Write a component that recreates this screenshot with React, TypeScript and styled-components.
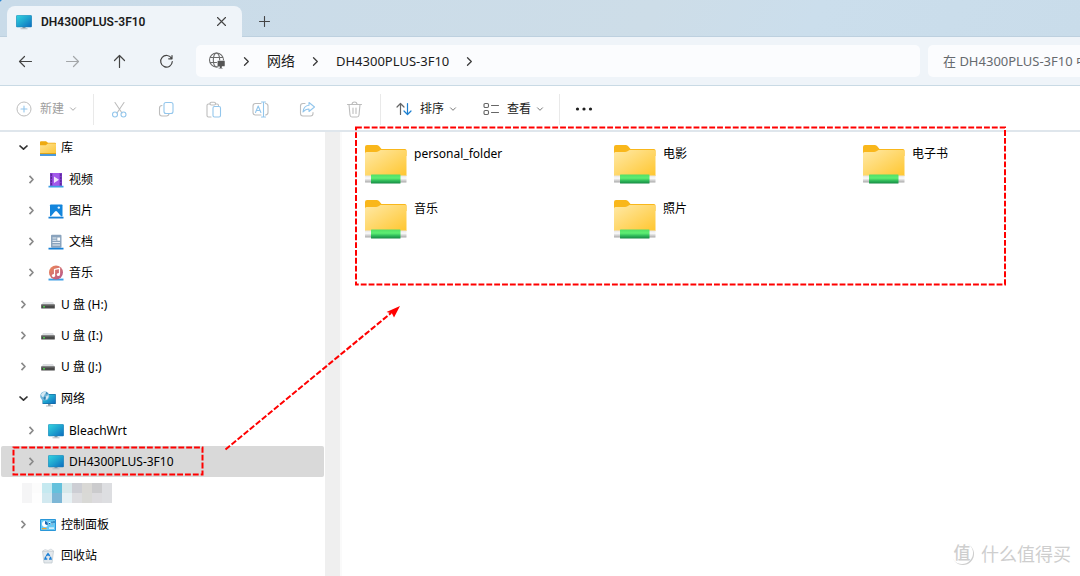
import React, { useState } from "react";
import styled, { createGlobalStyle, css } from "styled-components";

const GlobalStyle = createGlobalStyle`
  * { box-sizing: border-box; }
  html, body, #root { height: 100%; }
  body {
    margin: 0;
    background: #2f86cf;
    font-family: "Noto Sans", "Noto Sans CJK SC", sans-serif;
    font-size: 12px;
    line-height: 16px;
    color: #1b1b1b;
    overflow: hidden;
  }
  button, input { font: inherit; color: inherit; }
  ul { list-style: none; margin: 0; padding: 0; }
`;

const Window = styled.div`
  position: relative;
  display: flex;
  flex-direction: column;
  min-height: 100%;
  background: #fff;
  border-top-left-radius: 4px;
  overflow: hidden;
`;

const PlainButton = styled.button`
  display: flex;
  align-items: center;
  justify-content: center;
  padding: 0;
  border: 0;
  background: none;
  cursor: default;
`;

const TabStrip = styled.header`
  display: flex;
  align-items: flex-end;
  height: 37px;
  padding-left: 7px;
  background: linear-gradient(115deg, #c9dbe9 0%, #cddde8 60%, #cbdeec 75%, #c9dcea 100%);
  box-shadow: inset 0 -1px #bdd0df;
`;

const Tab = styled.div`
  display: flex;
  align-items: center;
  width: 235px;
  height: 31px;
  padding: 0 9px;
  gap: 9px;
  border-radius: 8px 8px 0 0;
  background: #eff4f9;
`;

const TabTitle = styled.span`
  flex: 1;
  font-family: Roboto, "Noto Sans CJK SC", sans-serif;
  font-weight: 600;
  white-space: nowrap;
`;

const TabButton = styled(PlainButton)`
  width: 24px;
  height: 24px;
`;

const NewTabButton = styled(PlainButton)`
  width: 45px;
  height: 31px;
`;

const NavBar = styled.nav`
  display: flex;
  align-items: center;
  height: 49px;
  padding-left: 2px;
  background: #eff4f9;
  border-bottom: 1px solid #c9dae5;
`;

const NavButton = styled(PlainButton)`
  width: 47px;
  height: 32px;
`;

const AddressBar = styled.div`
  display: flex;
  flex: 1;
  align-items: center;
  height: 32px;
  margin: 0 8px 0 6px;
  padding-left: 12px;
  border-radius: 5px;
  background: #fbfcfe;
`;

const Crumb = styled(PlainButton)<{ $han?: boolean }>`
  font-size: ${(p) => (p.$han ? 14 : 13)}px;
  line-height: 20px;
  white-space: nowrap;
`;

const CrumbArrow = styled(PlainButton)`
  width: 41px;
  height: 32px;
`;

const Search = styled.input`
  width: 152px;
  height: 32px;
  padding: 0 0 0 15px;
  border: 0;
  border-radius: 5px 0 0 5px;
  background: #fbfcfe;
  font-size: 13px;
  outline: none;
  &::placeholder { color: #666a6e; opacity: 1; }
`;

const Toolbar = styled.div`
  display: flex;
  align-items: center;
  height: 46px;
  padding-top: 2px;
  border-bottom: 2px solid #dfe6ec;
  background: #fff;
`;

const ToolDivider = styled.span`
  width: 1px;
  height: 31px;
  margin: 0 2px 0 0;
  background: #e9e9e9;
`;

const ToolIcon = styled(PlainButton)`
  width: 47px;
  height: 32px;
`;

const ToolGroup = styled.div`
  display: flex;
  padding-right: 2px;
`;

const ToolMenu = styled(PlainButton)<{ $first?: boolean }>`
  height: 32px;
  padding: 0 13px;
  ${(p) => p.$first && css`padding: 0 16px;`}
  > span { margin: 0 5px 0 8px; }
  &:disabled { color: #9d9d9d; }
`;

const Body = styled.div`
  display: flex;
  flex: 1;
`;

const Sidebar = styled.aside`
  flex: none;
  width: 325px;
  padding: 0 1px;
`;

const Tree = styled.ul`
  display: flex;
  flex-direction: column;
  gap: 1px;
`;

const Row = styled.div<{ $level: number; $selected?: boolean }>`
  display: flex;
  align-items: center;
  gap: 4px;
  height: 31px;
  padding-left: ${(p) => 10 + p.$level * 8}px;
  border-radius: 2px;
  background: ${(p) => (p.$selected ? "#d9d9d9" : "transparent")};
`;

const Expander = styled(PlainButton)`
  width: 25px;
  height: 24px;
`;

const ExpanderSpace = styled.span`
  width: 25px;
`;

const TreeItem = styled(PlainButton)`
  gap: 5px;
  flex: 1;
  justify-content: flex-start;
  height: 31px;
  color: #000;
  white-space: nowrap;
`;

const Mosaic = styled.div`
  display: grid;
  grid-template-columns: repeat(9, 10px);
  grid-auto-rows: 10px;
  padding: 5px 0 6px 21px;
`;

const MosaicCell = styled.span<{ $color: string }>`
  background: ${(p) => p.$color};
`;

const ScrollTrack = styled.div`
  flex: none;
  width: 15px;
  background: #efefef;
`;

const Content = styled.main`
  flex: 1;
  min-width: 0;
  padding: 10px 0 0 23px;
  border-left: 2px solid #fafafa;
`;

const FileGrid = styled.ul`
  display: grid;
  grid-template-columns: repeat(3, 249px);
  grid-auto-rows: 55px;
`;

const FileItem = styled(PlainButton)`
  align-items: flex-start;
  justify-content: flex-start;
  gap: 7px;
  color: #000;
  > span { padding-top: 4px; }
`;

const Watermark = styled.div`
  position: absolute;
  right: 9px;
  bottom: 11px;
  display: flex;
  align-items: center;
  gap: 8px;
  color: #cecece;
  font-family: "Noto Sans CJK SC", sans-serif;
  font-size: 18px;
  line-height: 24px;
`;

const WatermarkBadge = styled.span`
  width: 22px;
  height: 22px;
  border-radius: 50%;
  box-shadow: 1px 1px #cecece;
  font-size: 17px;
  line-height: 20px;
  text-align: center;
  font-weight: 500;
`;

const Annotations = styled.svg`
  position: absolute;
  top: 0;
  left: 0;
  pointer-events: none;
`;

const line = { fill: "none", strokeLinecap: "round", strokeLinejoin: "round" } as const;

const Monitor = () => (
  <svg width="16" height="16" viewBox="0 0 16 16" aria-hidden="true">
    <defs>
      <linearGradient id="screen" x1="0" y1="0" x2="1" y2="1">
        <stop offset="0" stopColor="#32d3df" />
        <stop offset="0.5" stopColor="#1ea3cf" />
        <stop offset="1" stopColor="#0d6cbf" />
      </linearGradient>
    </defs>
    <path d="M6.5 13h3v1.5h-3z" fill="#8c979f" />
    <path d="M4.5 14.3h7v1h-7z" fill="#b4bcc3" />
    <rect x="0.2" y="1.2" width="15.6" height="12" rx="0.8" fill="#1b7fb4" />
    <rect x="0.6" y="1.6" width="14.8" height="11.2" rx="0.4" fill="url(#screen)" />
  </svg>
);

const NetworkIcon = () => (
  <svg width="16" height="16" viewBox="0 0 16 16" aria-hidden="true">
    <path d="M8 13h2.5v2H8z" fill="#8c979f" />
    <path d="M6 14.5h7v1H6z" fill="#b4bcc3" />
    <rect x="2.5" y="3" width="13.3" height="10" rx="0.6" fill="#14659c" />
    <rect x="3" y="3.6" width="12.2" height="8.8" fill="url(#screen)" />
    <circle cx="4.8" cy="5" r="4.6" fill="#6fb4d8" />
    <path d="M1 3.5C2.5 1 5 .5 6 1 5.500 3 4.500 3 4 5S1.500 6 1 3.500zM6 5.500l2.500-1.500c.5 2-.5 4-2.500 4.800z" fill="#d5e9f2" />
    <path d="M4.300 5.500l1.500 1-1 2.500-1.300-1.500zM5.800.8L8 2.500 6.500 3.500z" fill="#2f7faf" />
  </svg>
);

const LibraryIcon = () => (
  <svg width="16" height="16" viewBox="0 0 16 16" aria-hidden="true">
    <defs>
      <linearGradient id="lib" x1="0" y1="0" x2="1" y2="1">
        <stop offset="0" stopColor="#ffe395" />
        <stop offset="1" stopColor="#fbc638" />
      </linearGradient>
    </defs>
    <path d="M0 2.200Q0 1.200 1 1.200h5L8 2.800h7Q16 2.800 16 3.800V8H0z" fill="#eeaa11" />
    <path d="M0 5.200h5.800L8 3.500h7.200q.8 0 .8.800V14H0z" fill="url(#lib)" />
    <path d="M0 13h16v1H0z" fill="#dda51b" />
    <path d="M0 14.300h16v1.500H0z" fill="#0f78d0" />
  </svg>
);

const VideoIcon = () => (
  <svg width="16" height="16" viewBox="0 0 16 16" aria-hidden="true">
    <rect x="2" y="1" width="12" height="13" rx="0.8" fill="#a259ea" />
    <path d="M2 1h2.500v13H2zM11.500 1H14v13h-2.500z" fill="#7d39c8" />
    <path d="M2.800 2.500h1v1h-1zm0 3h1v1h-1zm0 3h1v1h-1zm0 3h1v1h-1zM12.300 2.500h1v1h-1zm0 3h1v1h-1zm0 3h1v1h-1zm0 3h1v1h-1z" fill="#2c1550" />
    <path d="M6 4.500v6.500l5-3.200z" fill="#f0e5fc" />
    <path d="M0.500 13.800h15v1.700h-15z" fill="#3f9ee4" />
  </svg>
);

const PictureIcon = () => (
  <svg width="16" height="16" viewBox="0 0 16 16" aria-hidden="true">
    <rect x="2" y="1.500" width="12.500" height="12" rx="0.8" fill="#1385dc" />
    <path d="M2.500 13.800L7 8.500q1-1 2 0l4.500 5.300z" fill="#fff" />
    <circle cx="10.800" cy="4.600" r="1.200" fill="#e9f5ff" />
    <path d="M0.500 13.800h15v1.700h-15z" fill="#1580d6" />
  </svg>
);

const DocumentIcon = () => (
  <svg width="16" height="16" viewBox="0 0 16 16" aria-hidden="true">
    <rect x="3" y="0.800" width="10.500" height="13" rx="1" fill="#8aa3bd" />
    <path d="M4.500 3.500h4v1h-4zm0 2.300h4v1h-4zm0 2.300h7.500v1H4.500zm0 2.300h7.500v1H4.500z" fill="#e8eff6" />
    <rect x="9.300" y="3.500" width="2.800" height="3.200" fill="#fff" />
    <path d="M0.500 13.800h15v1.700h-15z" fill="#1580d6" />
  </svg>
);

const MusicIcon = () => (
  <svg width="16" height="16" viewBox="0 0 16 16" aria-hidden="true">
    <defs>
      <linearGradient id="music" x1="0" y1="0" x2="1" y2="1">
        <stop offset="0" stopColor="#ef8a55" />
        <stop offset="1" stopColor="#b4548f" />
      </linearGradient>
    </defs>
    <path d="M0.500 13.600h15v1.900h-15z" fill="#3f9ee4" />
    <circle cx="8" cy="7.500" r="7" fill="url(#music)" />
    <path d="M6.500 10.500V4.500l5-1.200v6" fill="none" stroke="#fff" strokeWidth="1.200" />
    <circle cx="5.500" cy="10.600" r="1.600" fill="#fff" />
    <circle cx="10.400" cy="9.500" r="1.600" fill="#fff" />
  </svg>
);

const DriveIcon = () => (
  <svg width="16" height="16" viewBox="0 0 16 16" aria-hidden="true">
    <path d="M3 5h10l1.500 3h-13z" fill="#dcdee2" />
    <rect x="1.200" y="7.500" width="13.600" height="4" rx="0.500" fill="#484848" />
    <path d="M1.200 7.500h13.600v1H1.200z" fill="#777" />
    <rect x="3" y="9.200" width="2" height="1.200" fill="#4be04b" />
  </svg>
);

const ControlPanelIcon = () => (
  <svg width="16" height="16" viewBox="0 0 16 16" aria-hidden="true">
    <rect x="0" y="2" width="16" height="12" rx="0.800" fill="#2a97d8" />
    <rect x="1" y="3" width="14" height="10" fill="#68c9f3" />
    <circle cx="5" cy="7" r="3" fill="#fff" />
    <path d="M5 7V4a3 3 0 0 1 2.500 4.500z" fill="#1869b4" />
    <path d="M2 11h4.500v1.200H2z" fill="#f2a528" />
    <path d="M9 10.500h5v1.200H9z" fill="#fff" />
    <path d="M9.500 7V5M12 8V4.500M14 6V4" stroke="#0c5b9c" strokeWidth="1" />
    <path d="M8.800 5.500h1.500M11.200 7h1.500" stroke="#fff" strokeWidth="1" />
  </svg>
);

const RecycleIcon = () => (
  <svg width="16" height="16" viewBox="0 0 16 16" aria-hidden="true">
    <path d="M2.500 3h11l-1.500 12H4z" fill="#e3e8ec" stroke="#bcc5cc" strokeWidth="0.700" />
    <path d="M3 3l2-1.500L8 2.500l3-1.500 2.500 2z" fill="#f7f9fa" stroke="#c3cad0" strokeWidth="0.600" />
    <path d="M6.300 8L8 5.800 9.700 8M10.300 8.800l.7 2.200H9M7.300 11H5l.8-2.400" fill="none" stroke="#1b7fd6" strokeWidth="1.500" />
  </svg>
);

const NetworkFolder = () => (
  <svg width="42" height="42" viewBox="0 0 42 42" aria-hidden="true">
    <defs>
      <linearGradient id="folder" x1="0" y1="0" x2="1" y2="1">
        <stop offset="0" stopColor="#ffe9a6" />
        <stop offset="1" stopColor="#ffc62f" />
      </linearGradient>
      <linearGradient id="pipe" x1="0" y1="0" x2="0" y2="1">
        <stop offset="0" stopColor="#52de68" />
        <stop offset="0.400" stopColor="#5eee73" />
        <stop offset="0.700" stopColor="#2fb95a" />
        <stop offset="1" stopColor="#168a43" />
      </linearGradient>
      <linearGradient id="pipeEnd" x1="0" y1="0" x2="0" y2="1">
        <stop offset="0" stopColor="#e5e5e5" />
        <stop offset="0.400" stopColor="#fafafa" />
        <stop offset="1" stopColor="#a9a9a9" />
      </linearGradient>
    </defs>
    <path d="M0 5q0-2 2-2h9.500q1.500 0 2.500 1l2.500 3H40q1.500 0 1.500 1.500V14H0z" fill="#f9b71b" />
    <path d="M0 11.500q0-1.500 1.500-1.500H11q1.500 0 2.500-.800L15.500 8H40q1.500 0 1.500 1.500V34H0z" fill="url(#folder)" />
    <rect x="0" y="33.500" width="41.500" height="7" rx="0.500" fill="url(#pipeEnd)" />
    <rect x="6" y="32.500" width="29.500" height="9" rx="0.500" fill="url(#pipe)" />
  </svg>
);

const Chevron = ({ open }: { open?: boolean }) => (
  <svg width="11" height="11" viewBox="0 0 11 11" aria-hidden="true">
    <path
      d={open ? "M1.500 3.500l4 3.700 4-3.700" : "M3.500 1.800L7 5.500 3.500 9.200"}
      {...line}
      strokeLinecap="butt"
      stroke={open ? "#333" : "#8a8a8a"}
      strokeWidth="1.700"
    />
  </svg>
);

const CrumbChevron = () => (
  <svg width="11" height="11" viewBox="0 0 11 11" aria-hidden="true">
    <path d="M3.500 1.800L7.300 5.500 3.500 9.200" {...line} stroke="#3c3c3c" strokeWidth="1.300" />
  </svg>
);

const MenuChevron = ({ dim }: { dim?: boolean }) => (
  <svg width="8" height="8" viewBox="0 0 8 8" aria-hidden="true">
    <path d="M1.500 2.800L4 5.300l2.500-2.500" {...line} stroke={dim ? "#aaa" : "#777"} strokeWidth="1" />
  </svg>
);

const GREY = "#bdbdbd";
const BLUE = "#93c6ec";

const editIcons: { name: string; art: React.ReactNode }[] = [
  {
    name: "剪切",
    art: (
      <>
        <path d="M4 1.500l7 10.500M13 1.500L6 12" stroke={GREY} />
        <circle cx="4" cy="13.500" r="2.500" stroke={BLUE} />
        <circle cx="12.500" cy="13.500" r="2.500" stroke={BLUE} />
      </>
    ),
  },
  {
    name: "复制",
    art: (
      <>
        <path d="M4 4.500q-2.500.3-2.500 2.500v5.500q0 2.500 2.500 2.500h4.500q2 0 2.500-2" stroke={GREY} />
        <rect x="6" y="1.500" width="9" height="11" rx="2" stroke={BLUE} />
      </>
    ),
  },
  {
    name: "粘贴",
    art: (
      <>
        <path d="M6 16H3.500Q2 16 2 14.500v-10Q2 3 3.500 3H5M10.500 3H12q1.500 0 1.500 1.500" stroke={GREY} />
        <rect x="5" y="1.200" width="5.500" height="2.800" rx="1.200" stroke={GREY} />
        <rect x="8" y="5.500" width="7.500" height="10.500" rx="1.500" stroke={BLUE} />
      </>
    ),
  },
  {
    name: "重命名",
    art: (
      <>
        <path d="M9 2.500H3.500q-2.500 0-2.500 2.500v6.500Q1 14 3.500 14H9M13.500 2.500q2.500.3 2.500 2.500v6.500q0 2.200-2.500 2.500" stroke={GREY} />
        <path d="M3.500 11.500L6.200 5l2.700 6.500M4.500 9.500h3.500M11.500 1v15M9.500 1h4M9.500 16h4" stroke={BLUE} />
      </>
    ),
  },
  {
    name: "共享",
    art: (
      <>
        <path d="M6 2.500H4q-2.500 0-2.500 2.500v7.500Q1.500 15 4 15h7.500q2.500 0 2.500-2.500v-1" stroke={GREY} />
        <path d="M10 1.500L15.500 6 10 10.500V8q-3.500 0-6 3Q4.500 4.800 10 4.200z" stroke={BLUE} />
      </>
    ),
  },
  {
    name: "删除",
    art: (
      <path
        d="M1.500 3.500h14M6 3.500q0-2.500 2.500-2.500T11 3.500M3 3.500l1 10.500q.2 2 2 2h5q1.800 0 2-2l1-10.500M7 7v5.500M10 7v5.500"
        stroke={GREY}
      />
    ),
  },
];

type Node = { label: string; icon: React.ReactNode; selected?: boolean; leaf?: boolean };

const libraries: Node[] = [
  { label: "视频", icon: <VideoIcon /> },
  { label: "图片", icon: <PictureIcon /> },
  { label: "文档", icon: <DocumentIcon /> },
  { label: "音乐", icon: <MusicIcon /> },
];
const drives: Node[] = ["H", "I", "J"].map((d) => ({ label: `U 盘 (${d}:)`, icon: <DriveIcon /> }));
const hosts: Node[] = [
  { label: "BleachWrt", icon: <Monitor /> },
  { label: "DH4300PLUS-3F10", icon: <Monitor />, selected: true },
];
const mosaic = [
  "#f5f5f6", "#fcfcfc", "#c5e9f0", "#64c1dc", "#d8e8ea", "#cdced4", "#d9d8d5", "#cbcbcd", "#dddee1",
  "#f5f5f6", "#fefefe", "#d2e9f0", "#7db7d6", "#e7f1f4", "#dddde0", "#d9d9d6", "#dcdbde", "#dddee1",
];
const files = ["personal_folder", "电影", "电子书", "音乐", "照片"];

const TreeRow = ({ node, level, open }: { node: Node; level: number; open?: boolean }) => (
  <Row $level={level} $selected={node.selected}>
    {node.leaf ? (
      <ExpanderSpace />
    ) : (
      <Expander aria-label={`展开 ${node.label}`} aria-expanded={!!open}>
        <Chevron open={open} />
      </Expander>
    )}
    <TreeItem>
      {node.icon}
      <span>{node.label}</span>
    </TreeItem>
  </Row>
);

const Branch = ({ nodes, level }: { nodes: Node[]; level: number }) => (
  <ul>
    {nodes.map((n) => (
      <li key={n.label}>
        <TreeRow node={n} level={level} />
      </li>
    ))}
  </ul>
);

export default function App() {
  const [query, setQuery] = useState("");
  return (
    <>
      <GlobalStyle />
      <Window>
        <TabStrip>
          <Tab>
            <Monitor />
            <TabTitle>DH4300PLUS-3F10</TabTitle>
            <TabButton aria-label="关闭标签页">
              <svg width="11" height="11" viewBox="0 0 11 11">
                <path d="M1.500 1.500l8 8M9.500 1.500l-8 8" {...line} stroke="#444" strokeWidth="1.100" />
              </svg>
            </TabButton>
          </Tab>
          <NewTabButton aria-label="新建标签页">
            <svg width="11" height="11" viewBox="0 0 11 11">
              <path d="M5.500 0.500v10M0.500 5.500h10" {...line} stroke="#444" strokeWidth="1.100" />
            </svg>
          </NewTabButton>
        </TabStrip>

        <NavBar>
          <NavButton aria-label="后退">
            <svg width="15" height="15" viewBox="0 0 15 15">
              <path d="M13.500 7.500h-12M6.500 2.500l-5 5 5 5" {...line} stroke="#444" strokeWidth="1.200" />
            </svg>
          </NavButton>
          <NavButton aria-label="前进" disabled>
            <svg width="15" height="15" viewBox="0 0 15 15">
              <path d="M1.500 7.500h12M8.500 2.500l5 5-5 5" {...line} stroke="#a3a6a9" strokeWidth="1.200" />
            </svg>
          </NavButton>
          <NavButton aria-label="向上">
            <svg width="15" height="15" viewBox="0 0 15 15">
              <path d="M7.500 13.500v-12M2.500 6.500l5-5 5 5" {...line} stroke="#444" strokeWidth="1.200" />
            </svg>
          </NavButton>
          <NavButton aria-label="刷新">
            <svg width="15" height="15" viewBox="0 0 15 15">
              <path d="M12.600 4.500A5.800 5.800 0 1 0 13.300 7.500M13 1.500v3.300H9.700" {...line} stroke="#444" strokeWidth="1.200" />
            </svg>
          </NavButton>
          <AddressBar>
            <svg width="18" height="18" viewBox="0 0 18 18" aria-hidden="true">
              <g fill="none" stroke="#6b6b6b" strokeWidth="1.100">
                <circle cx="8.500" cy="8" r="7" />
                <ellipse cx="8.500" cy="8" rx="3.200" ry="7" />
                <path d="M2 5.500h13M2 10.500h7" />
              </g>
              <path d="M9.300 8.500H16q1 0 1 1v4q0 1-1 1h-2V16h1v.800h-4.500V16h1v-1.500h-1.200q-1 0-1-1v-4q0-1 1-1z" fill="#555" stroke="#fbfcfe" strokeWidth="0.500" />
            </svg>
            <CrumbArrow aria-label="根位置"><CrumbChevron /></CrumbArrow>
            <Crumb $han>网络</Crumb>
            <CrumbArrow aria-label="网络子项"><CrumbChevron /></CrumbArrow>
            <Crumb>DH4300PLUS-3F10</Crumb>
            <CrumbArrow aria-label="设备子项"><CrumbChevron /></CrumbArrow>
          </AddressBar>
          <Search
            aria-label="搜索"
            placeholder="在 DH4300PLUS-3F10 中搜索"
            value={query}
            onChange={(e) => setQuery(e.target.value)}
          />
        </NavBar>

        <Toolbar>
          <ToolMenu $first disabled>
            <svg width="16" height="16" viewBox="0 0 16 16" aria-hidden="true">
              <circle cx="8" cy="8" r="7" fill="none" stroke={GREY} />
              <path d="M8 5v6M5 8h6" {...line} stroke={BLUE} strokeWidth="1.100" />
            </svg>
            <span>新建</span>
            <MenuChevron dim />
          </ToolMenu>
          <ToolDivider />
          <ToolGroup>
            {editIcons.map((i) => (
              <ToolIcon key={i.name} aria-label={i.name} disabled>
                <svg width="17" height="17" viewBox="0 0 17 17" {...line} strokeWidth="1.100">
                  {i.art}
                </svg>
              </ToolIcon>
            ))}
          </ToolGroup>
          <ToolDivider />
          <ToolMenu>
            <svg width="16" height="16" viewBox="0 0 16 16" aria-hidden="true" {...line} strokeWidth="1.200">
              <path d="M4.500 13.500V2.500M1 6l3.500-3.500L8 6" stroke="#666" />
              <path d="M11.500 2.500v11M8 10l3.500 3.500L15 10" stroke="#1c7fd0" />
            </svg>
            <span>排序</span>
            <MenuChevron />
          </ToolMenu>
          <ToolMenu>
            <svg width="16" height="16" viewBox="0 0 16 16" aria-hidden="true" {...line} stroke="#666" strokeWidth="1.100">
              <rect x="1" y="2.500" width="4.500" height="4" rx="1.200" />
              <rect x="1" y="9.500" width="4.500" height="4" rx="1.200" />
              <path d="M8.500 4.500h7M8.500 11.500h7" />
            </svg>
            <span>查看</span>
            <MenuChevron />
          </ToolMenu>
          <ToolGroup />
          <ToolDivider />
          <ToolMenu aria-label="查看更多">
            <svg width="18" height="4" viewBox="0 0 18 4" fill="#1f1f1f">
              <circle cx="2.500" cy="2" r="1.600" />
              <circle cx="9" cy="2" r="1.600" />
              <circle cx="15.500" cy="2" r="1.600" />
            </svg>
          </ToolMenu>
        </Toolbar>

        <Body>
          <Sidebar>
            <Tree>
              <li><TreeRow node={{ label: "库", icon: <LibraryIcon /> }} level={0} open /></li>
              <li><Branch nodes={libraries} level={1} /></li>
              <li><Branch nodes={drives} level={0} /></li>
              <li><TreeRow node={{ label: "网络", icon: <NetworkIcon /> }} level={0} open /></li>
              <li><Branch nodes={hosts} level={1} /></li>
              <li>
                <Mosaic aria-hidden="true">
                  {mosaic.map((c, i) => <MosaicCell key={i} $color={c} />)}
                </Mosaic>
                <TreeRow node={{ label: "控制面板", icon: <ControlPanelIcon /> }} level={0} />
                <TreeRow node={{ label: "回收站", icon: <RecycleIcon />, leaf: true }} level={0} />
              </li>
            </Tree>
          </Sidebar>
          <ScrollTrack />
          <Content>
            <FileGrid>
              {files.map((f) => (
                <li key={f}>
                  <FileItem>
                    <NetworkFolder />
                    <span>{f}</span>
                  </FileItem>
                </li>
              ))}
            </FileGrid>
          </Content>
        </Body>

        <Annotations width="1080" height="576" viewBox="0 0 1080 576" aria-hidden="true">
          <g fill="none" stroke="#ff0000" strokeWidth="2" strokeDasharray="5.850 2">
            <rect x="356" y="127.500" width="649" height="157" />
            <rect x="13.500" y="447.500" width="189" height="27" />
            <path d="M225.500 449.500L391 313" />
          </g>
          <path d="M400 306l-6 11.500-2-4-5.500-1.500z" fill="#ff0000" />
        </Annotations>

        <Watermark>
          <WatermarkBadge>值</WatermarkBadge>
          <span>什么值得买</span>
        </Watermark>
      </Window>
    </>
  );
}
